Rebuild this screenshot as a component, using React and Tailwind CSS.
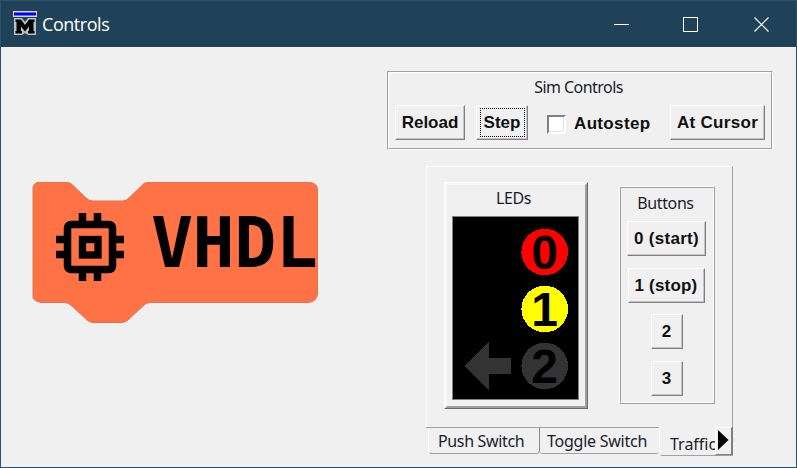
import React from "react";

const ui = "font-['Noto_Sans',sans-serif] text-[16px] leading-[20px] text-[#1c1c2c] whitespace-nowrap";

function PushButton({ children, className = "", focused = false }) {
  return (
    <button
      className={`relative flex h-[35px] shrink-0 items-center justify-center border border-t-white border-l-white border-r-[#808080] border-b-[#808080] bg-[#f0f0f0] pt-px font-['Liberation_Sans',sans-serif] text-[17px] leading-[20px] font-bold whitespace-nowrap text-[#111] shadow-[inset_-1px_-1px_0_#c4c4c4] ${className}`}
    >
      {focused && <span className="absolute top-[2px] right-[2px] bottom-[2px] left-[3px] border border-dotted border-black" />}
      {children}
    </button>
  );
}

function ControlsIcon() {
  return (
    <svg width="24" height="24" viewBox="0 0 24 24" className="mb-[2px] shrink-0">
      <rect width="24" height="6" fill="#d5d5d5" />
      <rect x="1" y="1.500" width="22" height="3" fill="#0000f5" />
      <path d="M1 7h8l3 4 3-4h8v17h-8l-3-2-3 2H1z" fill="#b9c1c8" />
      <path d="M2.500 8.500H8l4 5.500 4-5.500h5.500V11h-1v9h1v2.500H15V20h1v-4.500l-4 5-4-5V20h1v2.500H2.500V20h1v-9h-1z" fill="#000" />
    </svg>
  );
}

function VhdlBlock() {
  return (
    <svg width="288" height="144" viewBox="0 0 288 144" className="shrink-0">
      <path
        d="M6 2.500H36Q39 2.500 41 4.500L55 18Q58 21 62 21H92Q95 21 98 18L112 4.500Q114 2.500 117 2.500H279Q286.500 3 286.500 10V114Q285.500 122 277 122.500H119Q116 122.500 113 125L97 140Q94 142.500 91 142.500H62Q59 142.500 56 140L41 126Q37 122.500 34 122.500H10Q5 122 2 118V7Q3 3.500 6 2.500Z"
        fill="#ff7245"
        stroke="#ea704a"
        strokeWidth="1"
      />
      <rect x="36.500" y="44.500" width="45" height="45" rx="3.500" fill="none" stroke="#000" strokeWidth="7.500" />
      <rect x="51.500" y="59.500" width="15.500" height="15.500" fill="none" stroke="#000" strokeWidth="7.300" />
      <path
        d="M51.500 33v10M66.500 33v10M51.500 90v11M66.500 90v11M25 59.500h10M25 74.500h10M83 59.500h10M83 74.500h10"
        stroke="#000"
        strokeWidth="7.500"
      />
      <text
        x="120"
        y="87"
        textLength="167"
        lengthAdjust="spacing"
        fontFamily="'DejaVu Sans Mono', monospace"
        fontSize="70"
        fontWeight="700"
      >
        VHDL
      </text>
    </svg>
  );
}

function LedPanel() {
  const leds = [
    { n: "0", y: 36, fill: "#ff0000" },
    { n: "1", y: 93, fill: "#ffff00" },
    { n: "2", y: 150, fill: "#333333" },
  ];
  return (
    <svg width="127" height="184" viewBox="0 0 127 184" shapeRendering="crispEdges" className="ml-[5px] self-start">
      <rect width="127" height="184" fill="#808080" />
      <rect x="1" y="1" width="125" height="182" fill="#000" />
      {leds.map((l) => (
        <g key={l.n}>
          <circle cx="92.700" cy={l.y} r="23.300" fill={l.fill} />
          <text
            x="92.500"
            y={l.y + 17}
            textAnchor="middle"
            fontFamily="'Liberation Sans', sans-serif"
            fontWeight="700"
            fontSize="48"
            fill="#000"
          >
            {l.n}
          </text>
        </g>
      ))}
      <path d="M12.500 150L36.500 126V141.500H59V158H36.500V173.500Z" fill="#333" />
    </svg>
  );
}

function SimControls() {
  return (
    <section className="flex h-[79px] w-[386px] flex-col border border-t-[#a0a0a0] border-r-white border-b-white border-l-[#a0a0a0]">
      <div className="h-full border border-t-white border-r-[#a0a0a0] border-b-[#a0a0a0] border-l-white pt-[4px] pl-[6px]">
        <div className={`${ui} pr-[9px] text-center tracking-[-0.55px]`}>Sim Controls</div>
        <div className="mt-[8px] flex items-start">
          <PushButton className="w-[70px]">Reload</PushButton>
          <PushButton className="ml-[11px] w-[52px]" focused>Step</PushButton>
          <label className="mt-[9px] ml-[19px] flex items-center">
            <span className="h-[19px] w-[19px] border-2 border-t-[#808080] border-r-white border-b-white border-l-[#808080] bg-white shadow-[inset_-1px_-1px_0_#e3e3e3]" />
            <span className="ml-[8px] font-['Liberation_Sans',sans-serif] text-[17px] leading-[20px] font-bold tracking-[0.35px] text-[#111]">Autostep</span>
          </label>
          <PushButton className="mr-[6px] ml-auto w-[95px] tracking-[0.3px]">At Cursor</PushButton>
        </div>
      </div>
    </section>
  );
}

function Leds() {
  return (
    <section className="h-[227px] w-[144px] border border-t-white border-r-[#696969] border-b-[#696969] border-l-white">
      <div className="flex h-full flex-col items-center border-2 border-t-[#f8f8f8] border-r-[#a0a0a0] border-b-[#a0a0a0] border-l-[#f8f8f8] pt-[3px]">
        <div className={`${ui} mb-[8px] pr-[5px] tracking-[-0.4px]`}>LEDs</div>
        <LedPanel />
      </div>
    </section>
  );
}

function Buttons() {
  return (
    <section className="mt-[4px] h-[218px] w-[96px] border border-t-white border-r-[#a0a0a0] border-b-[#a0a0a0] border-l-white">
      <div className="flex h-full flex-col items-center border border-t-[#a0a0a0] border-r-white border-b-white border-l-[#a0a0a0] pt-[5px]">
        <div className={`${ui} mb-[8px] pr-[3px] tracking-[-0.4px]`}>Buttons</div>
        <div className="flex flex-col items-center gap-[11.500px] pr-[1px]">
          <PushButton className="w-[79px] tracking-[0.3px]">0 (start)</PushButton>
          <PushButton className="mr-[1px] w-[77px] tracking-[0.2px]">1 (stop)</PushButton>
          <PushButton className="w-[32px]">2</PushButton>
          <PushButton className="w-[32px]">3</PushButton>
        </div>
      </div>
    </section>
  );
}

function Tabs() {
  return (
    <div className="flex h-[29px] w-[307px] items-start">
      <div className={`${ui} h-[27px] w-[114px] border-t border-[#a0a0a0] pl-[2px]`}>
        <div className="h-[26px] rounded-b-[4px] border-r border-b border-l border-r-[#888] border-b-[#a0a0a0] border-l-white pt-[3px] pl-[9px] tracking-[-0.35px]">Push Switch</div>
      </div>
      <div className={`${ui} h-[27px] w-[119px] rounded-b-[3px] border-t border-b border-[#a0a0a0] pt-[3px] pl-[7px] tracking-[-0.25px]`}>
        Toggle Switch
      </div>
      <div className="flex h-[29px] w-[74px] rounded-bl-[4px] border-r border-b border-l border-r-[#808080] border-b-[#a0a0a0] border-l-white">
        <div className={`${ui} w-[55px] overflow-hidden pt-[7px] pl-[10px]`}>Traffic</div>
        <button className="flex h-[28px] w-[17px] items-center border border-t-white border-r-[#808080] border-b-[#808080] border-l-white bg-[#f0f0f0] pb-[3px] pl-px">
          <svg width="12" height="20" viewBox="0 0 12 20" className="shrink-0">
            <path d="M1 0L11.500 10L1 20Z" fill="#000" />
          </svg>
        </button>
      </div>
    </div>
  );
}

export default function App() {
  return (
    <div className="flex h-[468px] w-[797px] flex-col overflow-hidden border border-[#2d5368] bg-[#f0f0f0]">
      <header className="flex h-[46px] shrink-0 items-center bg-[#1f4259] pl-[12px] text-white">
        <ControlsIcon />
        <h1 className="ml-[5px] font-['Open_Sans',sans-serif] text-[18px] leading-[24px] font-normal tracking-[-0.45px]">Controls</h1>
        <div className="ml-auto flex items-center pr-[26px]">
          <svg width="16" height="16" viewBox="0 0 16 16" shapeRendering="crispEdges">
            <path d="M0 8.500h15" stroke="currentColor" />
          </svg>
          <svg width="16" height="16" viewBox="0 0 16 16" className="ml-[53px]" shapeRendering="crispEdges">
            <rect x="0.500" y="1.500" width="14" height="14" fill="none" stroke="currentColor" />
          </svg>
          <svg width="16" height="16" viewBox="0 0 16 16" className="ml-[55px]">
            <path d="M0.500 1.500l14 14M14.500 1.500l-14 14" stroke="currentColor" strokeWidth="1.200" />
          </svg>
        </div>
      </header>
      <main className="flex flex-1 items-start">
        <div className="mt-[133px] ml-[30px]">
          <VhdlBlock />
        </div>
        <div className="mt-[24px] ml-[68px]">
          <SimControls />
          <div className="mt-[16px] ml-[39px] w-[307px]">
            <div className="flex h-[261px] items-start border-t border-r border-l border-t-white border-r-[#a0a0a0] border-l-white pt-[15px] pl-[17px]">
              <Leds />
              <div className="ml-[31px]">
                <Buttons />
              </div>
            </div>
            <Tabs />
          </div>
        </div>
      </main>
    </div>
  );
}
